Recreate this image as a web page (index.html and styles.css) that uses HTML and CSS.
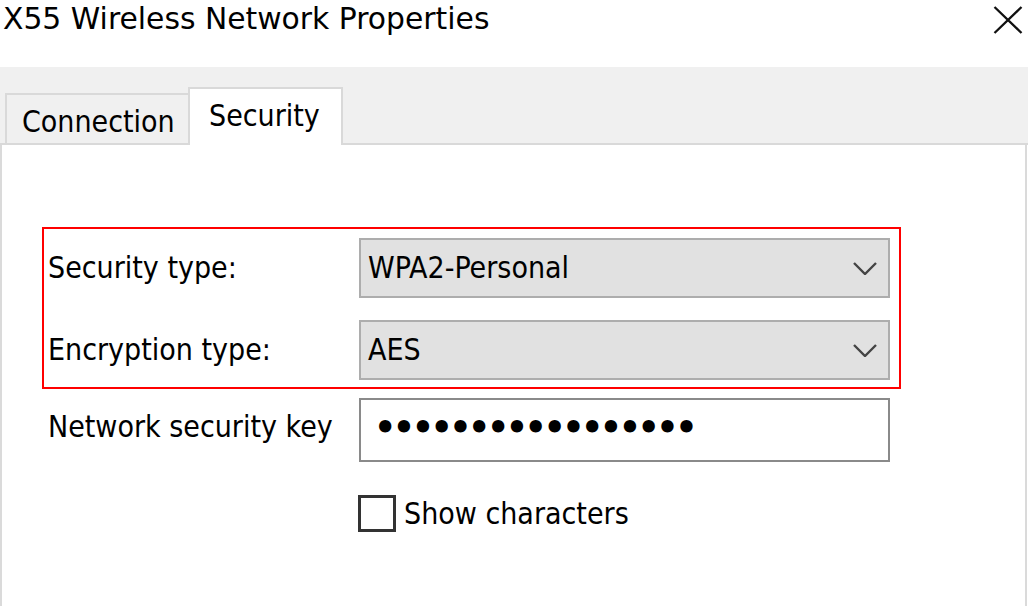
FILE: index.html
```html
<!DOCTYPE html>
<html>
<head>
<meta charset="utf-8">
<link rel="stylesheet" href="styles.css">
</head>
<body>
<div class="titlebar">
  <div class="title">X55 Wireless Network Properties</div>
  <svg class="close" viewBox="0 0 30 28" width="30" height="28"><path d="M1.5 1 L28.5 27 M28.5 1 L1.5 27" stroke="#111" stroke-width="2.3" fill="none"/></svg>
</div>
<div class="tabstrip">
  <div class="tab-gap"></div>
  <div class="tab tab-conn">Connection</div>
  <div class="tab tab-sec">Security</div>
  <div class="tab-fill"></div>
</div>
<div class="panel">
  <div class="group">
    <div class="label">Security type:</div>
    <div class="select"><span>WPA2-Personal</span><svg class="chev" viewBox="0 0 24 13" width="24" height="13"><path d="M1 1 L12 12 L23 1" stroke="#444" stroke-width="2.4" fill="none"/></svg></div>
    <div class="label">Encryption type:</div>
    <div class="select"><span>AES</span><svg class="chev" viewBox="0 0 24 13" width="24" height="13"><path d="M1 1 L12 12 L23 1" stroke="#444" stroke-width="2.4" fill="none"/></svg></div>
  </div>
  <div class="keyrow">
    <div class="label keylabel">Network security key</div>
    <div class="keybox"><span class="dots">•••••••••••••••••</span></div>
  </div>
  <div class="checkrow">
    <div class="checkbox"></div>
    <div class="checklabel">Show characters</div>
  </div>
</div>
</body>
</html>
```
FILE: styles.css
```css
html, body {
  margin: 0;
  padding: 0;
}
body {
  width: 1028px;
  height: 606px;
  overflow: hidden;
  display: flex;
  flex-direction: column;
  background: #fff;
  color: #000;
  font-family: "DejaVu Sans", sans-serif;
  font-stretch: condensed;
  font-size: 30px;
  line-height: 30px;
}
.titlebar {
  height: 67px;
  flex: none;
  box-sizing: border-box;
  display: flex;
  justify-content: space-between;
  align-items: flex-start;
  padding: 0 5px 0 3px;
}
.title {
  font-stretch: normal;
  font-size: 29.8px;
  line-height: 38px;
}
.close {
  margin-top: 6px;
}
.tabstrip {
  height: 78px;
  flex: none;
  display: flex;
  align-items: flex-end;
  background: #f0f0f0;
}
.tab-gap {
  width: 5px;
  border-bottom: 2px solid #d9d9d9;
}
.tab {
  box-sizing: border-box;
  border: 2px solid #d9d9d9;
  padding-top: 12px;
}
.tab-conn {
  width: 183px;
  height: 52px;
  border-right: none;
  padding-left: 15px;
  background: #f0f0f0;
}
.tab-sec {
  width: 155px;
  height: 58px;
  border-bottom: none;
  padding-left: 19px;
  background: #fff;
}
.tab-fill {
  flex: 1;
  border-bottom: 2px solid #d9d9d9;
}
.panel {
  flex: 1;
  width: 1027px;
  box-sizing: border-box;
  border-left: 2px solid #dadada;
  border-right: 2px solid #dadada;
  padding: 82px 0 0 40px;
}
.group {
  width: 859px;
  height: 162px;
  box-sizing: border-box;
  border: 2px solid #ff0000;
  padding: 9px 9px 0 4px;
  display: grid;
  grid-template-columns: 311px 531px;
  grid-auto-rows: 60px;
  row-gap: 22px;
  align-items: center;
}
.select {
  height: 60px;
  box-sizing: border-box;
  background: #e1e1e1;
  border: 2px solid #adadad;
  display: flex;
  align-items: center;
  justify-content: space-between;
  padding: 0 11px 0 7px;
}
.keyrow {
  display: grid;
  grid-template-columns: 311px 531px;
  margin: 9px 0 0 6px;
  align-items: start;
}
.keylabel {
  padding-top: 14px;
}
.keybox {
  height: 64px;
  box-sizing: border-box;
  border: 2px solid #8a8a8a;
  background: #fff;
  display: flex;
  align-items: center;
  padding: 0 0 4px 13px;
}
.dots {
  font-stretch: normal;
  font-weight: bold;
  font-size: 35px;
  letter-spacing: -3.55px;
}
.checkrow {
  display: flex;
  align-items: center;
  gap: 8px;
  margin: 33px 0 0 316px;
}
.checkbox {
  width: 38px;
  height: 37px;
  box-sizing: border-box;
  border: 3px solid #333;
  background: #fff;
}
```
